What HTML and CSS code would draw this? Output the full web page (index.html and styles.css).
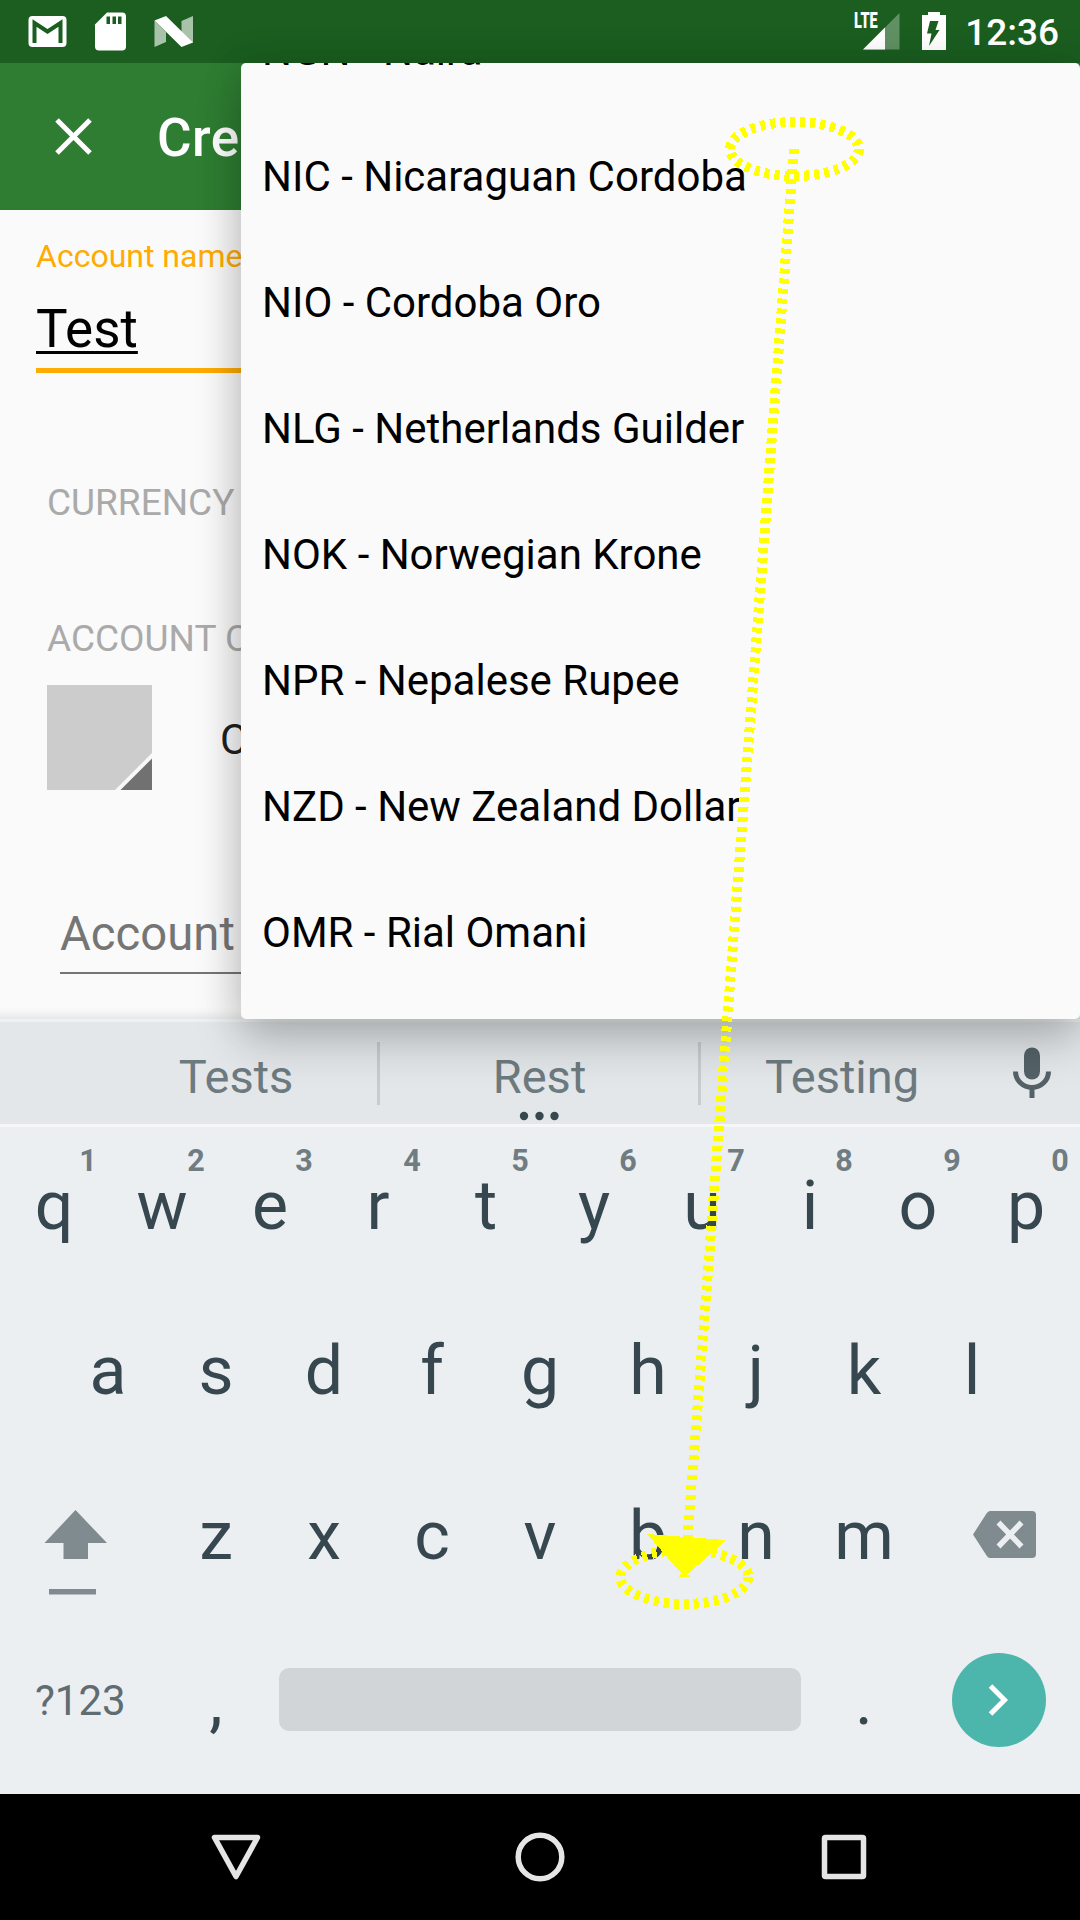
FILE: index.html
```html
<!DOCTYPE html>
<html lang="en">
<head>
<meta charset="utf-8">
<title>Create account</title>
<link rel="stylesheet" href="styles.css">
</head>
<body>
<div class="screen">
  <header class="status">
    <svg class="status-left" width="200" height="63" viewBox="0 0 200 63">
      <rect x="28.500" y="16" width="38" height="31" rx="4" fill="#fff"/>
      <path d="M34.500 43V23L47.500 31.500L60.500 23V43" fill="none" stroke="#1b5e20" stroke-width="4"/>
      <path d="M107 12.500H122Q126 12.500 126 16.500V46.500Q126 50.500 122 50.500H99Q95 50.500 95 46.500V24.500Z" fill="#fff"/>
      <path d="M106.500 16.500h3.500v7.500h-3.500zM112.500 16.500h3.500v7.500h-3.500zM118 16.500h3.500v7.500h-3.500z" fill="#1b5e20"/>
      <path d="M154.500 20.500L166 32V42L154.500 47ZM181.500 21L193 16V43L181.500 32Z" fill="#a9c3ab"/>
      <path d="M154.500 20.500L166 16L193 42.500L181.500 47Z" fill="#fff"/>
    </svg>
    <div class="status-right">
      <span class="lte">LTE</span>
      <svg width="94" height="63" viewBox="0 0 94 63">
        <path d="M9 49.500L45.500 13V49.500Z" fill="#619064"/>
        <path d="M9 49.500L31 27.500V49.500Z" fill="#fff"/>
        <path d="M68 15h6v-3h12v3h6v35h-24z" fill="#fff"/>
        <path d="M76 21h8.500l-3 9h4l-10.500 16 2.500-12.500h-4.500z" fill="#1b5e20"/>
      </svg>
      <span class="clock">12:36</span>
    </div>
  </header>

  <div class="appbar">
    <svg width="40" height="40" viewBox="0 0 40 40"><path d="M3 3L36 36M36 3L3 36" stroke="#fff" stroke-width="5"/></svg>
    <span class="title">Cre</span>
  </div>

  <main class="form">
    <div class="field">
      <div class="field-label">Account name</div>
      <div class="field-value"><span>Test</span></div>
    </div>
    <div class="section">CURRENCY</div>
    <div class="section section-color">ACCOUNT C</div>
    <div class="color-row">
      <svg width="105" height="105" viewBox="0 0 105 105">
        <path d="M0 0H105V105H0Z" fill="#ccc"/>
        <path d="M68 105L105 68V75L75 105Z" fill="#f8f8f8"/>
        <path d="M73.500 105L105 73.500V105Z" fill="#717171"/>
      </svg>
      <span>C</span>
    </div>
    <div class="parent">Account</div>
  </main>

  <section class="keyboard">
    <div class="suggestions">
      <span class="word">Tests</span>
      <i class="divider"></i>
      <span class="word more">Rest
        <svg width="42" height="10" viewBox="0 0 42 10"><g fill="#37474f"><circle cx="5" cy="5" r="4.200"/><circle cx="20.500" cy="5" r="4.200"/><circle cx="35.500" cy="5" r="4.200"/></g></svg>
      </span>
      <i class="divider"></i>
      <span class="word">Testing</span>
      <svg class="mic" width="38" height="52" viewBox="0 0 38 52">
        <rect x="11" y="0.500" width="16" height="32" rx="8" fill="#546268"/>
        <path d="M2.500 24.500a16.500 16 0 0 0 33 0M19 40v11" fill="none" stroke="#546268" stroke-width="5"/>
      </svg>
    </div>
    <div class="row hinted">
      <div class="key"><b>1</b>q</div><div class="key"><b>2</b>w</div><div class="key"><b>3</b>e</div><div class="key"><b>4</b>r</div><div class="key"><b>5</b>t</div><div class="key"><b>6</b>y</div><div class="key"><b>7</b>u</div><div class="key"><b>8</b>i</div><div class="key"><b>9</b>o</div><div class="key"><b>0</b>p</div>
    </div>
    <div class="row">
      <div class="key">a</div><div class="key">s</div><div class="key">d</div><div class="key">f</div><div class="key">g</div><div class="key">h</div><div class="key">j</div><div class="key">k</div><div class="key">l</div>
    </div>
    <div class="row">
      <svg class="wide" width="162" height="100" viewBox="0 0 162 100">
        <path d="M75.500 8L107 41H88V57H63.500V41H44.500Z" fill="#808b8f"/>
        <path d="M49 87h47v5.500h-47z" fill="#808b91"/>
      </svg>
      <div class="key">z</div><div class="key">x</div><div class="key">c</div><div class="key">v</div><div class="key">b</div><div class="key">n</div><div class="key">m</div>
      <svg class="wide" width="162" height="100" viewBox="0 0 162 100">
        <path d="M72 9H114Q118 9 118 13V52Q118 56 114 56H72Q70 56 68.500 53.500L55 32.500L68.500 11.500Q70 9 72 9Z" fill="#808b8f"/>
        <path d="M80.500 20.500L103.500 44.500M103.500 20.500L80.500 44.500" stroke="#eceff1" stroke-width="5.500"/>
      </svg>
    </div>
    <div class="row bottom">
      <div class="symbols">?123</div>
      <div class="key">,</div>
      <div class="space"></div>
      <div class="key">.</div>
      <div class="enter"><svg width="94" height="94" viewBox="0 0 94 94"><path d="M38.500 33L52.500 47L38.500 61" fill="none" stroke="#fff" stroke-width="5"/></svg></div>
    </div>
  </section>

  <nav class="navbar">
    <svg width="52" height="52" viewBox="0 0 52 52"><path d="M4.500 6.500H47.500L26 45.500Z"/></svg>
    <svg width="52" height="52" viewBox="0 0 52 52"><circle cx="26" cy="26" r="21.800"/></svg>
    <svg width="52" height="52" viewBox="0 0 52 52"><rect x="6.500" y="6.500" width="39" height="39" rx="1"/></svg>
  </nav>

  <ul class="dropdown">
    <li>NGN - Naira</li>
    <li>NIC - Nicaraguan Cordoba</li>
    <li>NIO - Cordoba Oro</li>
    <li>NLG - Netherlands Guilder</li>
    <li>NOK - Norwegian Krone</li>
    <li>NPR - Nepalese Rupee</li>
    <li>NZD - New Zealand Dollar</li>
    <li>OMR - Rial Omani</li>
  </ul>

  <svg class="gesture" width="1080" height="1920" viewBox="0 0 1080 1920" shape-rendering="crispEdges">
    <g fill="none" stroke="#ff0" stroke-width="10" stroke-dasharray="5 5">
      <ellipse cx="794.500" cy="149" rx="64.500" ry="27"/>
      <ellipse cx="684.500" cy="1577" rx="64" ry="27"/>
      <path d="M794 149L684.500 1577"/>
    </g>
    <path d="M647 1534L726 1540L684.500 1577Z" fill="#ff0"/>
  </svg>
</div>
</body>
</html>
```
FILE: styles.css
```css
* { box-sizing: border-box; }
body { margin: 0; font-family: Roboto, sans-serif; }
svg { display: block; flex: none; }

.screen {
  position: relative;
  display: flex;
  flex-direction: column;
  width: 1080px;
  height: 1920px;
  overflow: hidden;
  background: #fafafa;
}

.status {
  display: flex;
  justify-content: space-between;
  height: 63px;
  background: #1b5e20;
  color: #fff;
}
.status-right { display: flex; padding-right: 21px; }
.lte {
  width: 0;
  font-size: 22px;
  font-weight: 900;
  line-height: 26px;
  padding-top: 8px;
  transform: scaleX(.66);
  transform-origin: left top;
}
.clock {
  margin-left: 17px;
  font-size: 37px;
  font-weight: 500;
  line-height: 66px;
}

.appbar {
  display: flex;
  align-items: center;
  height: 147px;
  padding-left: 54px;
  background: #2e7d32;
  color: #fff;
}
.title {
  margin-left: 63px;
  padding-top: 3px;
  font-size: 53px;
  font-weight: 500;
  line-height: 60px;
  letter-spacing: .4px;
}

.form { height: 809px; overflow: hidden; box-shadow: inset 0 -14px 12px -12px rgba(0,0,0,.12); }
.field { margin-left: 36px; padding-top: 26px; border-bottom: 5px solid #ffab00; }
.field-label { color: #ffab00; font-size: 32px; line-height: 40px; }
.field-value { margin: 21px 0 7px; font-size: 53px; line-height: 64px; color: #000; }
.field-value span {
  text-decoration: underline;
  text-decoration-thickness: 3px;
  text-underline-offset: 4px;
  text-decoration-skip-ink: none;
}
.section { margin: 108px 0 0 47px; font-size: 37px; line-height: 44px; color: #aaa; }
.section-color { margin-top: 92px; }
.color-row {
  display: flex;
  align-items: center;
  gap: 68px;
  margin: 24px 0 0 47px;
  font-size: 42px;
  line-height: 50px;
  color: #212121;
}
.color-row span { padding-top: 5px; }
.parent {
  margin: 115px 0 0 60px;
  padding-bottom: 9px;
  border-bottom: 2px solid #757575;
  font-size: 47.25px;
  line-height: 58px;
  color: #757575;
}

.keyboard {
  display: flex;
  flex-direction: column;
  height: 775px;
  border-top: 3px solid #eff0f1;
  background: #eceff1;
  color: #37474f;
}
.suggestions {
  display: flex;
  height: 105px;
  padding-left: 95px;
  border-bottom: 3px solid #f5f7f8;
  background: #e3e7e9;
  font-size: 47px;
  line-height: 58px;
  color: #6d7a80;
}
.word { width: 282px; padding-top: 26px; text-align: center; }
.more { width: 318px; padding-left: 1px; }
.more svg { margin: 5px auto 0; }
.divider { width: 3px; height: 63px; margin-top: 20px; background: #c7cccf; }
.mic { margin: 25px 0 0 30px; }

.row { display: flex; justify-content: center; height: 165px; padding-top: 45px; }
.hinted { padding-top: 22px; }
.key { width: 108px; font-size: 68px; line-height: 68px; text-align: center; }
.key b {
  display: block;
  padding-left: 68px;
  font-size: 30.5px;
  line-height: 23px;
  color: #6f7c82;
}
.bottom { height: 172px; }
.symbols { width: 162px; font-size: 42px; line-height: 68px; padding-left: 35px; color: #5f6c72; }
.space { width: 522px; height: 63px; margin: 1px 9px 0; border-radius: 10px; background: #d1d5d8; }
.enter { width: 94px; height: 94px; margin: -14px 34px 0 34px; border-radius: 50%; background: #4db6ac; }

.navbar {
  display: flex;
  justify-content: center;
  gap: 252px;
  height: 126px;
  padding-top: 37px;
  background: #000;
}
.navbar svg { fill: none; stroke: #e5e5e5; stroke-width: 5.5px; stroke-linejoin: round; }

.dropdown {
  position: absolute;
  left: 241px;
  top: 63px;
  width: 839px;
  height: 956px;
  margin: 0;
  padding: 0;
  overflow: hidden;
  list-style: none;
  border-radius: 5px;
  background: #fafafa;
  box-shadow: 0 24px 48px rgba(0,0,0,.2), 0 0 40px rgba(0,0,0,.14);
}
.dropdown li { height: 126px; padding-left: 21px; font-size: 42px; line-height: 126px; color: #000; }
.dropdown li:first-child { margin-top: -75px; }

.gesture { position: absolute; left: 0; top: 0; }
```
